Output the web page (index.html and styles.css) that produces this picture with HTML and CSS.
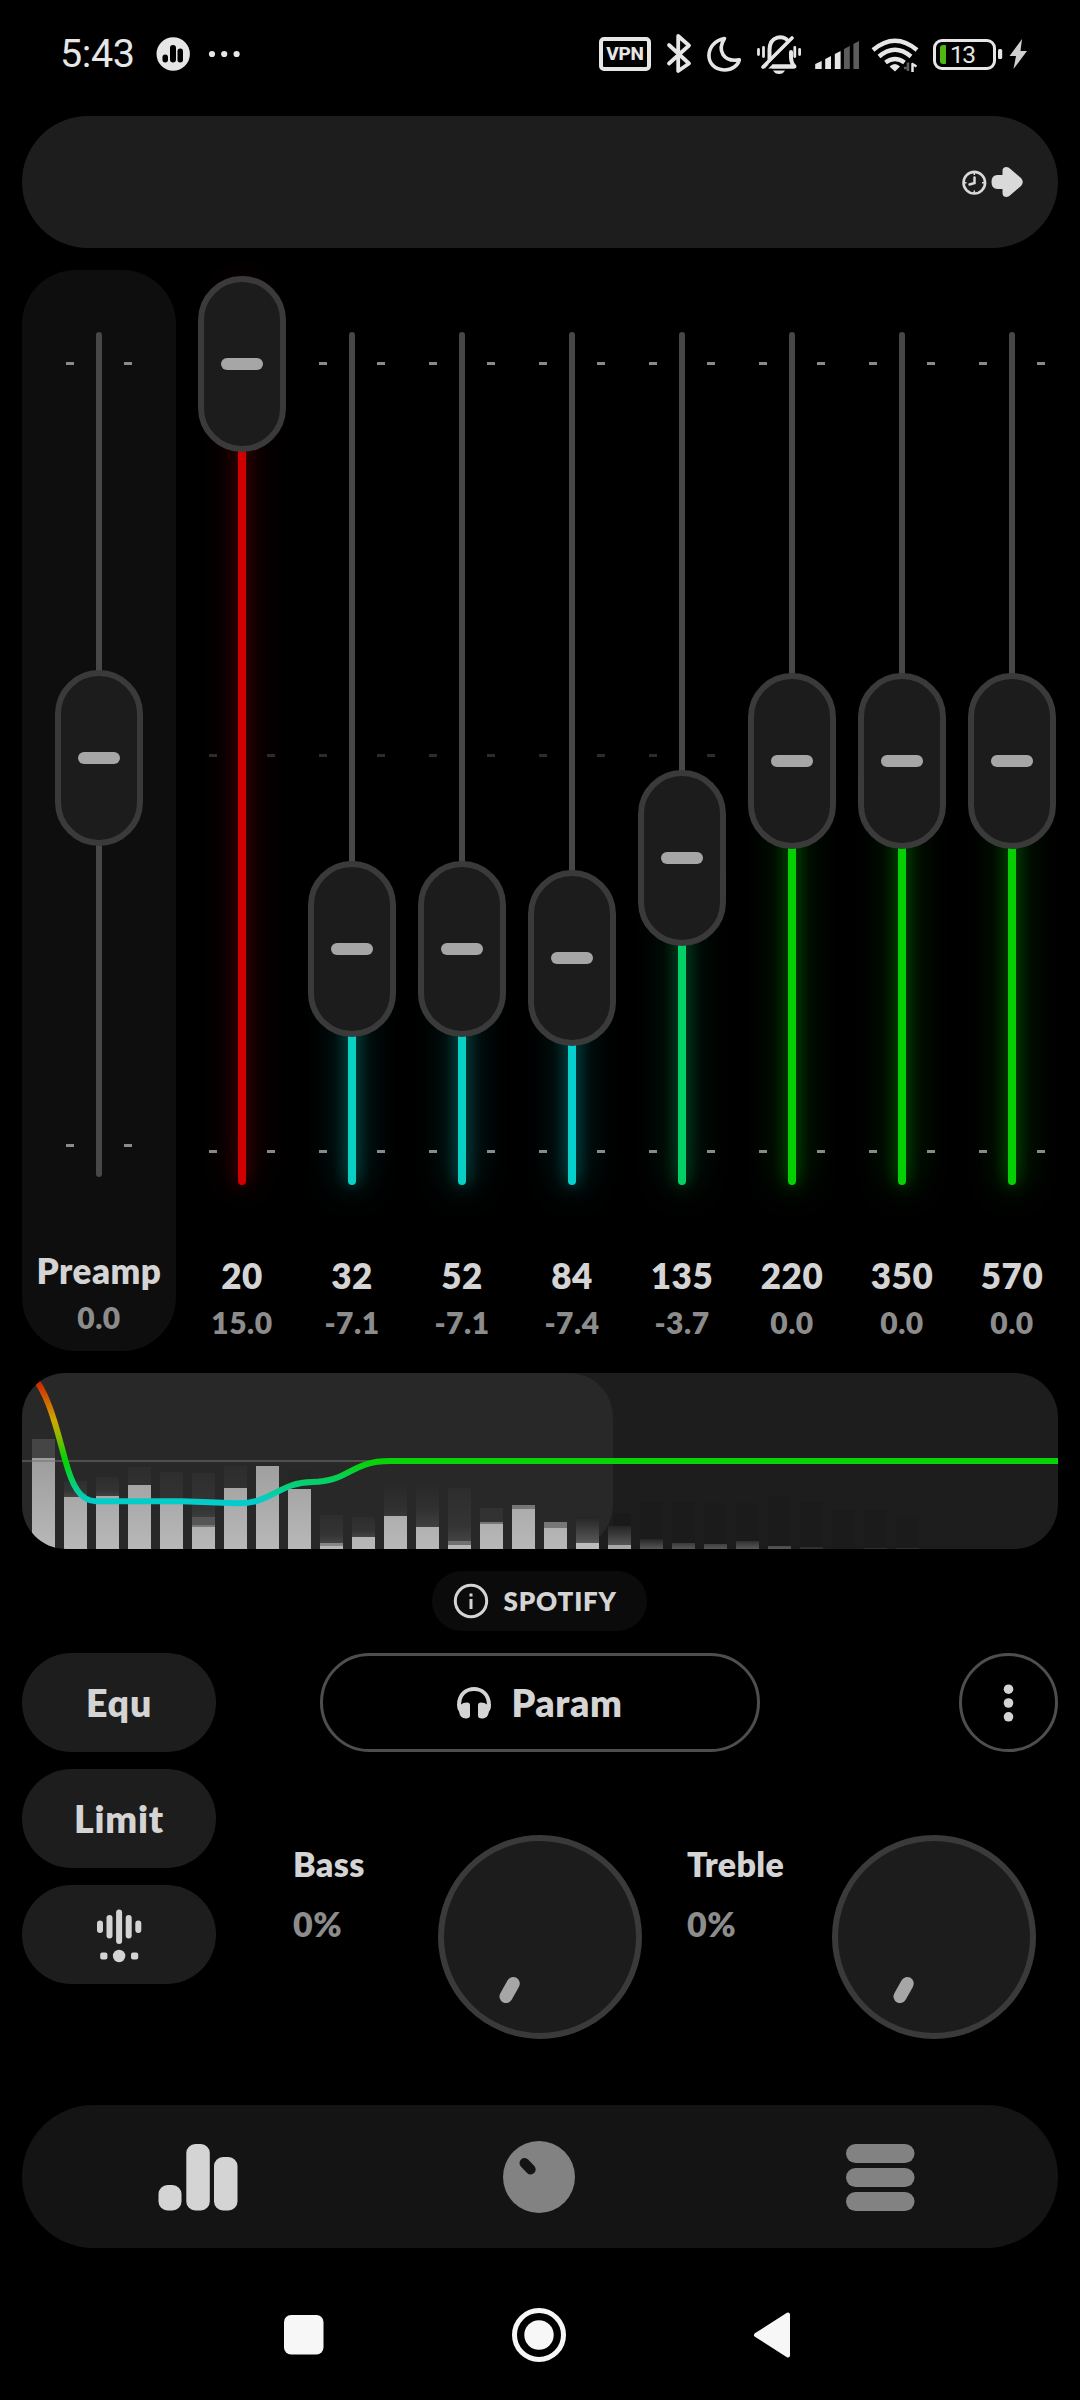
FILE: index.html
```html
<!DOCTYPE html>
<html lang="en">
<head>
<meta charset="utf-8">
<title>Equalizer</title>
<link rel="stylesheet" href="styles.css">
</head>
<body>
<div class="screen">
  <header class="status">
    <span class="time">5:43</span>
    <svg class="status-left" width="100" height="40" viewBox="150 34 100 40">
      <circle cx="173.2" cy="54" r="16.7" fill="#e6e6e6"/>
      <g fill="#000"><rect x="162.500" y="54.500" width="5.500" height="8" rx="2.700"/><rect x="170" y="45" width="6" height="17.500" rx="3"/><rect x="177.500" y="48.500" width="5.500" height="14" rx="2.700"/></g>
      <g fill="#e6e6e6"><circle cx="212" cy="54" r="3.100"/><circle cx="224.200" cy="54" r="3.100"/><circle cx="236.600" cy="54" r="3.100"/></g>
    </svg>
    <span class="vpn">VPN</span>
    <svg class="status-right" width="262" height="44" viewBox="660 32 262 44" fill="none" stroke="#e6e6e6" stroke-linecap="round" stroke-linejoin="round">
      <path stroke-width="3.800" d="M669 45 689 63.500 678.200 71V36L689 45.500 669 63.500"/>
      <path stroke-width="3.600" d="M724.500 38.500C704 42 703.500 69.500 724.500 70 732 70 738 65.500 739.300 59.800 723 62.500 717 50 724.500 38.500Z"/>
      <path stroke-width="4" d="M765.500 66.500H794.500Q791 63 791 57V52M769.500 60V50C769.500 35.500 784 34.500 788 41"/>
      <path stroke-width="3.600" d="M763 67 792 38"/>
      <path stroke="#000" stroke-width="2.500" d="M766.500 68.500 794.500 40.500"/>
      <path stroke-width="4" stroke-linecap="butt" d="M772 66.500H794.500"/>
      <path stroke-width="2.800" d="M758.500 49.500V54.500M763.500 47.500V56.500M794.800 47.500V56.500M799.600 49.500V54.500"/>
      <path fill="#e6e6e6" stroke="none" d="M773 70.500H785Q783 74 779 74T773 70.500Z"/>
      <g stroke="none" fill="#e6e6e6"><path d="M815.200 64 821.700 61V69H815.200ZM825.200 59 831 56V69H825.200ZM834.800 54 840.600 51V69H834.800Z"/><path fill="#5c5c5c" d="M844 49 849.800 46V69H844ZM853.400 44 859 41V69H853.400Z"/></g>
      <path stroke-width="4.400" stroke-linecap="butt" d="M873 50Q895 31.500 917 50M879 56.500Q895 43 911 56.500M885.500 62.500Q895 55.500 904.500 62.500"/>
      <path fill="#e6e6e6" stroke="none" d="M889.500 66.500Q895 61.500 900 66.500L895 71.500Z"/>
      <path stroke="#5c5c5c" stroke-width="2.500" stroke-linecap="butt" d="M908 62.500V71M904 68H908"/>
      <path stroke-width="2.500" stroke-linecap="butt" d="M912.500 72V64L916.500 66.500"/>
    </svg>
    <span class="battery"><i class="charge"></i><b class="percent">13</b></span>
    <svg class="bolt" width="32" height="34" viewBox="996 37 32 34">
      <rect x="998" y="49" width="4.200" height="10" rx="1.500" fill="#e6e6e6"/>
      <path fill="#d0d0d0" d="M1022 39 1009.500 56H1016L1013.500 69 1027 51H1020.500Z"/>
    </svg>
  </header>

  <div class="track-bar">
    <svg width="65" height="36" viewBox="960 164 65 36">
      <g fill="none" stroke="#d9d9d9">
        <circle cx="974.300" cy="182.700" r="10.800" stroke-width="2.600"/>
        <path stroke-width="2.500" stroke-linecap="round" d="M974.500 177.500V183L969.500 184.500"/>
        <path stroke-width="1.500" d="M974.300 172.500V175M974.300 190.500V193M964 182.700H966.500M982 182.700H984.500"/>
      </g>
      <path fill="#d9d9d9" d="M997.500 175H1002.500V171Q1002.500 167 1006.500 167 1008.500 167 1010.500 169L1021 178Q1024.500 182 1021 186L1010.500 195Q1008.500 197 1006.500 197 1002.500 197 1002.500 193V189H997.500Q991.500 189 991.500 182T997.500 175Z"/>
    </svg>
  </div>

  <section class="equalizer">
    <div class="band preamp">
      <div class="slider"><i class="rail"></i><i class="ticks top"></i><i class="ticks low"></i><span class="thumb" style="top:488px"></span></div>
      <strong class="label">Preamp</strong><span class="value">0.0</span>
    </div>
    <div class="bands">
      <div class="band"><div class="slider"><i class="rail"></i><i class="ticks top"></i><i class="ticks mid"></i><i class="ticks low"></i><i class="fill" style="top:12px;--c:#d00000;--g:#d0000060"></i><span class="thumb" style="top:94px"></span></div><strong class="label">20</strong><span class="value">15.0</span></div>
      <div class="band"><div class="slider"><i class="rail"></i><i class="ticks top"></i><i class="ticks mid"></i><i class="ticks low"></i><i class="fill" style="top:679px;--c:#08d0c5;--g:#08d0c578"></i><span class="thumb" style="top:679px"></span></div><strong class="label">32</strong><span class="value">-7.1</span></div>
      <div class="band"><div class="slider"><i class="rail"></i><i class="ticks top"></i><i class="ticks mid"></i><i class="ticks low"></i><i class="fill" style="top:679px;--c:#08d0c5;--g:#08d0c578"></i><span class="thumb" style="top:679px"></span></div><strong class="label">52</strong><span class="value">-7.1</span></div>
      <div class="band"><div class="slider"><i class="rail"></i><i class="ticks top"></i><i class="ticks mid"></i><i class="ticks low"></i><i class="fill" style="top:688px;--c:#06d0cd;--g:#06d0cd78"></i><span class="thumb" style="top:688px"></span></div><strong class="label">84</strong><span class="value">-7.4</span></div>
      <div class="band"><div class="slider"><i class="rail"></i><i class="ticks top"></i><i class="ticks mid"></i><i class="ticks low"></i><i class="fill" style="top:588px;--c:#04d068;--g:#04d06870"></i><span class="thumb" style="top:588px"></span></div><strong class="label">135</strong><span class="value">-3.7</span></div>
      <div class="band"><div class="slider"><i class="rail"></i><i class="ticks top"></i><i class="ticks mid"></i><i class="ticks low"></i><i class="fill" style="top:491px;--c:#04d004;--g:#04d00478"></i><span class="thumb" style="top:491px"></span></div><strong class="label">220</strong><span class="value">0.0</span></div>
      <div class="band"><div class="slider"><i class="rail"></i><i class="ticks top"></i><i class="ticks mid"></i><i class="ticks low"></i><i class="fill" style="top:491px;--c:#04d004;--g:#04d00478"></i><span class="thumb" style="top:491px"></span></div><strong class="label">350</strong><span class="value">0.0</span></div>
      <div class="band"><div class="slider"><i class="rail"></i><i class="ticks top"></i><i class="ticks mid"></i><i class="ticks low"></i><i class="fill" style="top:491px;--c:#04d004;--g:#04d00478"></i><span class="thumb" style="top:491px"></span></div><strong class="label">570</strong><span class="value">0.0</span></div>
    </div>
  </section>

  <section class="spectrum">
    <svg width="1036" height="176" viewBox="0 0 1036 176">
      <defs>
        <linearGradient id="solid" gradientUnits="userSpaceOnUse" x1="0" y1="85" x2="0" y2="176"><stop stop-color="#9d9d9d"/><stop offset="1" stop-color="#b8b8b8"/></linearGradient>
        <linearGradient id="faint" x1="0" y1="0" x2="0" y2="1"><stop stop-color="#2d2d2d"/><stop offset=".7" stop-color="#343434"/><stop offset="1" stop-color="#444"/></linearGradient>
        <linearGradient id="fade" x1="0" y1="0" x2="0" y2="1"><stop stop-color="#272727"/><stop offset=".6" stop-color="#303030"/><stop offset="1" stop-color="#404040"/></linearGradient>
        <linearGradient id="glow" x1="0" y1="0" x2="0" y2="1"><stop stop-color="#2c2c2c"/><stop offset=".7" stop-color="#3a3a3a"/><stop offset="1" stop-color="#b0b0b0"/></linearGradient>
        <linearGradient id="low" x1="0" y1="0" x2="0" y2="1"><stop stop-color="#252525"/><stop offset="1" stop-color="#585858"/></linearGradient>
        <linearGradient id="gain" gradientUnits="userSpaceOnUse" x1="0" y1="0" x2="0" y2="132"><stop stop-color="#d00000"/><stop offset=".08" stop-color="#d02a00"/><stop offset=".36" stop-color="#cfa800"/><stop offset=".48" stop-color="#8cb800"/><stop offset=".64" stop-color="#08d208"/><stop offset=".68" stop-color="#08d208"/><stop offset=".83" stop-color="#06d06c"/><stop offset=".97" stop-color="#04cccc"/></linearGradient>
      </defs>
      <rect width="1036" height="176" fill="#1d1d1d"/>
      <rect x="-60" width="651" height="176" rx="44" fill="#282828"/>
      <path fill="#1b1b1b" d="M618 129h23v47h-23zM650 129h23v47h-23zM682 130h23v46h-23zM714 130h23v46h-23zM746 123h23v53h-23zM778 129h23v47h-23zM810 137h23v39h-23zM842 137h23v39h-23zM874 144h23v32h-23z"/>
      <path fill="#1a1a1a" d="M591 140h18v15h-18z"/>
      <path fill="#454545" d="M10 66h23v19H10z"/>
      <path fill="url(#faint)" d="M42 108h23v16H42zM74 104h23v19H74z"/>
      <path fill="url(#faint)" d="M106 94h23v18h-23zM138 99h23v28h-23zM170 100h23v54h-23zM202 93h23v22h-23zM234 93h23v5h-23z"/>
      <path fill="#262626" d="M266 97h23v19h-23z"/>
      <path fill="url(#faint)" d="M298 142h23v28h-23z"/><path fill="#868686" d="M298 170h23v3h-23z"/><path fill="url(#faint)" d="M330 144h23v20h-23z"/>
      <path fill="url(#fade)" d="M362 107h23v36h-23zM394 106h23v48h-23z"/>
      <path fill="url(#faint)" d="M426 115h23v54h-23z"/><path fill="#707070" d="M426 168h23v4h-23z"/>
      <path fill="#323232" d="M458 135h23v16h-23z"/>
      <path fill="#555" d="M170 144h23v8h-23z"/>
      <path fill="#777" d="M170 152h23v2h-23zM458 149h23v2h-23zM490 132h23v4h-23zM522 149h23v6h-23z"/>
      <path fill="url(#low)" d="M554 144h23v26h-23z"/><path fill="#bcbcbc" d="M554 170h23v6h-23z"/>
      <path fill="url(#low)" d="M586 153h23v20h-23z"/><path fill="#a8a8a8" d="M586 172h23v4h-23z"/>
      <path fill="url(#low)" d="M618 166h23v10h-23zM650 170h23v6h-23zM682 171h23v5h-23zM714 168h23v8h-23zM746 173h23v3h-23z"/>
      <path fill="#303030" d="M778 174h23v2h-23zM842 175h23v1h-23zM874 175h23v1h-23z"/>
      <path fill="url(#solid)" d="M10 85h23v91H10zM42 124h23v52H42zM74 123h23v53H74zM106 112h23v64h-23zM138 127h23v49h-23zM170 154h23v22h-23zM202 115h23v61h-23zM234 93h23v83h-23zM266 116h23v60h-23zM298 173h23v3h-23zM330 164h23v12h-23zM362 143h23v33h-23zM394 154h23v22h-23zM426 172h23v4h-23zM458 151h23v25h-23zM490 136h23v40h-23zM522 155h23v21h-23z"/>
      <path fill="#505050" d="M0 87h370v2H0z"/>
      <path fill="#868686" d="M10 87h23v2H10z"/>
      <path fill="none" stroke="url(#gain)" stroke-width="6" d="M8 0C27 18 36 62 43.500 88 50 112 58 128.300 74 128.300H160L215 130.300C250 131 256 109.500 290 109 328 108.500 328 88 368 88H1036"/>
    </svg>
  </section>

  <div class="source">
    <svg width="36" height="36" viewBox="0 0 36 36"><circle cx="18" cy="18" r="15.700" fill="none" stroke="#d4d4d4" stroke-width="3"/><path fill="#d4d4d4" d="M16.500 10.500h3v3h-3zM16.500 16h3v10h-3z"/></svg>
    <span class="source-name">SPOTIFY</span>
  </div>

  <section class="controls">
    <div class="modes">
      <button class="pill">Equ</button>
      <button class="pill">Limit</button>
      <button class="pill"><svg width="46" height="58" viewBox="0 0 46 58" fill="#d4d4d4"><rect x="1" y="14.500" width="6" height="12.500" rx="3"/><rect x="10.500" y="9" width="6" height="23.500" rx="3"/><rect x="20.100" y="3.500" width="6" height="34.500" rx="3"/><rect x="29.700" y="9" width="6" height="23.500" rx="3"/><rect x="39.300" y="14.500" width="6" height="12.500" rx="3"/><rect x="4.200" y="46.500" width="7.200" height="7" rx="2"/><circle cx="23.100" cy="50" r="6.200"/><rect x="35" y="46.500" width="7.200" height="7" rx="2"/></svg></button>
    </div>
    <div class="tone">
      <div class="presets">
        <button class="preset"><svg width="34" height="32" viewBox="0 0 34 32"><path fill="#d4d4d4" d="M0 18C0-6 34-6 34 18 34 21 33.500 23 32 24.500 31 29.500 29 31.500 25 31.500 22 31.500 21 30.500 21 28.500V18Q21 15.500 24 15.500 28 15.500 30 17.500 29 4 17 4T4 17.500Q6 15.500 10 15.500 13 15.500 13 18V28.500Q13 31.500 9 31.500 3 31.500 2 24.500 0 22 0 18Z"/></svg>Param</button>
        <button class="more"><svg width="12" height="40" viewBox="0 0 12 40" fill="#d4d4d4"><circle cx="5.500" cy="6.200" r="4.800"/><circle cx="5.500" cy="20" r="4.800"/><circle cx="5.500" cy="33.800" r="4.800"/></svg></button>
      </div>
      <div class="knobs">
        <div class="knob-group"><div class="knob-text"><strong class="knob-name">Bass</strong><span class="knob-value">0%</span></div>
          <svg width="204" height="204" viewBox="0 0 204 204"><circle cx="102" cy="102" r="99" fill="#1c1c1c" stroke="#3a3a3a" stroke-width="6"/><path stroke="#a6a6a6" stroke-width="13" stroke-linecap="round" d="M75.300 148.500 68 161.500"/></svg></div>
        <div class="knob-group"><div class="knob-text"><strong class="knob-name">Treble</strong><span class="knob-value">0%</span></div>
          <svg width="204" height="204" viewBox="0 0 204 204"><circle cx="102" cy="102" r="99" fill="#1c1c1c" stroke="#3a3a3a" stroke-width="6"/><path stroke="#a6a6a6" stroke-width="13" stroke-linecap="round" d="M75.300 148.500 68 161.500"/></svg></div>
      </div>
    </div>
  </section>

  <nav class="tabs">
    <svg width="80" height="70" viewBox="158.500 2141 80 70" fill="#d4d4d4"><rect x="159" y="2184" width="23" height="25.500" rx="9"/><rect x="186.800" y="2143" width="23.500" height="66.500" rx="9"/><rect x="214.500" y="2156" width="23.500" height="53.500" rx="9"/></svg>
    <svg class="tab-knob" width="74" height="74" viewBox="0 0 74 74"><circle cx="37" cy="37" r="36" fill="#828282"/><path stroke="#141414" stroke-width="10" stroke-linecap="round" d="M22.500 23 28.700 29.500"/></svg>
    <svg width="70" height="70" viewBox="0 0 70 70" fill="#828282"><rect x="1" y="2" width="68.500" height="19" rx="9.500"/><rect x="1" y="26" width="68.500" height="19" rx="9.500"/><rect x="1" y="50" width="68.500" height="19" rx="9.500"/></svg>
  </nav>

  <nav class="system">
    <svg width="40" height="40" viewBox="0 0 40 40"><rect width="39.500" height="39.500" rx="7" fill="#f7f7f7"/></svg>
    <svg width="54" height="54" viewBox="0 0 54 54" fill="#f7f7f7"><circle cx="27" cy="27" r="24.500" fill="none" stroke="#f7f7f7" stroke-width="5"/><circle cx="27" cy="27" r="14.700"/></svg>
    <svg width="38" height="48" viewBox="0 0 38 48"><path fill="#f7f7f7" stroke="#f7f7f7" stroke-width="4" stroke-linejoin="round" d="M35 3.500V44.500L3 24Z"/></svg>
  </nav>
</div>
</body>
</html>
```
FILE: styles.css
```css
* { box-sizing: border-box; }
html, body { margin: 0; background: #000; }
body { font-family: Lato, "Open Sans", sans-serif; color: #d4d4d4; }
svg { display: block; flex: none; }
button { border: 0; padding: 0; background: none; color: inherit; font: inherit; }

.screen {
  width: 1080px;
  height: 2400px;
  padding: 0 22px;
  overflow: hidden;
  display: flex;
  flex-direction: column;
}

/* status bar */
.status {
  height: 116px;
  flex: none;
  display: flex;
  align-items: center;
  margin: 0 27px 0 38px;
  padding-bottom: 8px;
  color: #e6e6e6;
}
.time { font: 400 39.5px/40px Roboto, sans-serif; letter-spacing: -0.4px; width: 90px; }
.vpn {
  width: 52px;
  height: 34px;
  margin-left: auto;
  border: 4px solid #e6e6e6;
  border-radius: 5px;
  font: 800 19px/26px Roboto, sans-serif;
  letter-spacing: -0.2px;
  text-align: center;
}
.status-right { margin-left: 9px; }
.battery {
  width: 63px;
  height: 31px;
  margin-left: 11px;
  border: 3px solid #e6e6e6;
  border-radius: 9px;
  display: flex;
  align-items: center;
  padding-left: 4px;
}
.charge { width: 6px; height: 19px; border-radius: 3px 1px 1px 3px; background: #4fb614; }
.percent { font: 400 24.5px/25px Roboto, sans-serif; margin-left: 4px; letter-spacing: -1.5px; }
.bolt { margin-right: 3px; }

.track-bar {
  height: 132px;
  flex: none;
  border-radius: 66px;
  background: #1d1d1d;
  display: flex;
  align-items: center;
  justify-content: flex-end;
  padding-right: 33px;
}

/* sliders */
.equalizer { margin-top: 22px; height: 1081px; flex: none; display: flex; gap: 11px; }
.bands { display: grid; grid-template-columns: repeat(8, 110px); }
.band { display: flex; flex-direction: column; align-items: center; }
.preamp { width: 154px; flex: none; border-radius: 54px; background: #0e0e0e; }
.slider { position: relative; width: 88px; height: 983px; flex: none; }
.preamp .slider { height: 978px; }
.rail {
  position: absolute;
  left: 41px;
  top: 62px;
  width: 6px;
  height: 852px;
  border-radius: 3px;
  background: #474747;
}
.preamp .rail { height: 845px; }
.fill {
  position: absolute;
  left: 40px;
  bottom: 68px;
  width: 8px;
  border-radius: 4px;
  background: var(--c);
  box-shadow: 0 0 36px 1px var(--g), 0 0 16px var(--g);
}
.ticks {
  position: absolute;
  left: 11px;
  width: 66px;
  height: 3px;
  border: solid #8a8a8a;
  border-width: 0 8px;
}
.ticks.top { top: 92px; }
.ticks.mid { top: 484px; border-color: #2c2c2c; }
.ticks.low { top: 880px; }
.preamp .ticks.low { top: 874px; }
.thumb {
  position: absolute;
  left: 0;
  width: 88px;
  height: 176px;
  margin-top: -88px;
  border: 6px solid #3a3a3a;
  border-radius: 44px;
  background: #1c1c1c;
  display: flex;
  align-items: center;
  justify-content: center;
}
.thumb::before { content: ""; width: 42px; height: 12px; border-radius: 6px; background: #a6a6a6; }
.label { font-size: 35px; line-height: 44px; font-weight: 800; letter-spacing: 0.5px; }
.value { margin-top: 7px; font-size: 30px; line-height: 36px; font-weight: 800; letter-spacing: 0.5px; color: #8c8c8c; }

/* spectrum */
.spectrum { margin-top: 22px; height: 176px; flex: none; border-radius: 44px; overflow: hidden; }

.source {
  align-self: center;
  margin: 22px 2px 0 0;
  width: 215px;
  height: 60px;
  flex: none;
  border-radius: 30px;
  background: #0b0b0b;
  display: flex;
  align-items: center;
  padding-left: 21px;
  gap: 15px;
}
.source-name { font-size: 26px; font-weight: 800; line-height: 32px; letter-spacing: 0.8px; }

/* controls */
.controls { margin-top: 22px; height: 452px; flex: none; display: flex; }
.modes { width: 194px; display: flex; flex-direction: column; gap: 17px; }
.pill {
  height: 99px;
  border-radius: 50px;
  background: #1d1d1d;
  display: flex;
  align-items: center;
  justify-content: center;
  font-size: 37.500px;
  font-weight: 800;
  letter-spacing: 0.8px;
}
.tone { flex: 1; }
.presets { display: flex; justify-content: space-between; padding-left: 104px; }
.preset, .more {
  height: 99px;
  border: 3px solid #4e4e4e;
  border-radius: 50px;
  display: flex;
  align-items: center;
  justify-content: center;
}
.preset { width: 440px; gap: 20px; font-size: 37.500px; font-weight: 800; letter-spacing: 0.6px; }
.more { width: 99px; }
.knobs { display: flex; gap: 45px; margin-top: 83px; padding-left: 77px; }
.knob-group { width: 349px; display: flex; justify-content: space-between; }
.knob-text { display: flex; flex-direction: column; padding-top: 8px; }
.knob-name { font-size: 34px; line-height: 42px; font-weight: 800; letter-spacing: 0.3px; }
.knob-value { margin-top: 18px; font-size: 34px; line-height: 42px; font-weight: 800; letter-spacing: 0.5px; color: #8c8c8c; }

/* navigation */
.tabs {
  height: 143px;
  flex: none;
  border-radius: 72px;
  background: #141414;
  display: flex;
  align-items: center;
  justify-content: space-between;
  padding: 0 143px 0 136px;
}
.tab-knob { margin-right: 5px; }
.system {
  flex: 1;
  display: flex;
  align-items: center;
  justify-content: space-between;
  padding: 22px 267px 0 262px;
}
```
